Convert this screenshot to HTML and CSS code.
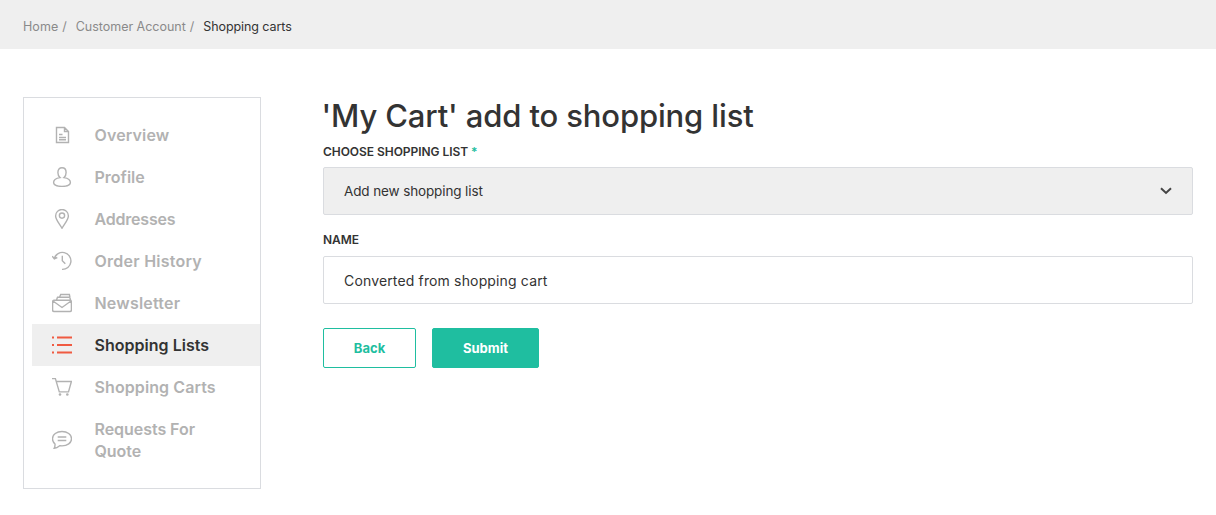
FILE: index.html
```html
<!DOCTYPE html>
<html lang="en">
<head>
<meta charset="utf-8">
<title>Add to shopping list</title>
<link rel="stylesheet" href="styles.css">
</head>
<body>
<nav class="breadcrumb">
  <a class="crumb crumb-home">Home</a><span class="sep">/</span>
  <a class="crumb crumb-account">Customer Account</a><span class="sep">/</span>
  <span class="crumb current">Shopping carts</span>
</nav>
<div class="layout">
  <aside class="menu">
    <a class="item"><svg class="icon" viewBox="0 0 20 20"><path d="M4.500 2.500h8l4 4v11h-12zM12.500 2.500v4h4M7 9.500h3.500M7 12.500h7M7 14.700h7"/></svg><span class="t-overview">Overview</span></a>
    <a class="item"><svg class="icon" viewBox="0 0 20 20"><path d="M8 10.600C6.700 9.600 5.900 7.700 5.900 5.500 5.900 2.500 7.400.8 10 .8s4.100 1.700 4.100 4.700c0 2.200-.8 4.100-2.100 5.100 3.600.5 6.400 2.300 6.400 5 0 2.600-3.600 3.800-8.400 3.800s-8.400-1.200-8.400-3.800c0-2.700 2.800-4.500 6.400-5z"/></svg><span class="t-profile">Profile</span></a>
    <a class="item"><svg class="icon" viewBox="0 0 20 20"><path d="M10 19.300C8.200 15.500 3.600 10.800 3.600 6.900a6.400 6.400 0 0 1 12.800 0c0 3.900-4.600 8.600-6.400 12.400z"/><circle cx="10" cy="6.600" r="2.600"/></svg><span class="t-addresses">Addresses</span></a>
    <a class="item"><svg class="icon" viewBox="0 0 20 20"><path d="M2.300 7.400A8.500 8.500 0 1 1 10 18.400M.2 5.200l2.100 2.600 3-1.300M10.300 4.800v5l3 3"/></svg><span class="t-history">Order History</span></a>
    <a class="item"><svg class="icon" viewBox="0 0 20 20"><path d="M2 7.300h16c.9 0 1.400.5 1.400 1.400v8.400c0 .9-.5 1.400-1.400 1.400H2c-.9 0-1.400-.5-1.400-1.400V8.700c0-.9.500-1.400 1.400-1.400zM1 8l9 6.500L19 8M4.500 7l1-2.700h12.300l.7 2.700M7.500 4.200l1.200-2.700h8.700l.5 2.700"/></svg><span class="t-newsletter">Newsletter</span></a>
    <a class="item active"><svg class="icon" viewBox="0 0 20 20"><path d="M0 2.500h2M5 2.500h15M0 10h2M5 10h15M0 17.500h2M5 17.500h15"/></svg><span class="t-lists">Shopping Lists</span></a>
    <a class="item"><svg class="icon" viewBox="0 0 20 20"><path d="M0 1.600h3.400l3.900 13.300h9.200L19.400 4.500H4.300"/><circle class="solid" cx="8" cy="17.500" r="1.300"/><circle class="solid" cx="15.300" cy="17.500" r="1.300"/></svg><span class="t-carts">Shopping Carts</span></a>
    <a class="item"><svg class="icon" viewBox="0 0 20 20"><path d="M10 1.500c5.300 0 9.500 3 9.500 7.200s-4.200 7.200-9.500 7.200c-.8 0-1.500-.1-2.300-.2-1.600 1.300-3.300 2.400-5.500 2.600.6-1.200.9-2.700.8-4.300C1.400 12.700.5 10.800.5 8.700.5 4.500 4.700 1.500 10 1.500zM5.700 7h8.600M5.700 10.500h8.600"/></svg><span class="t-quote">Requests For Quote</span></a>
  </aside>
  <main class="content">
    <h1 class="title">'My Cart' add to shopping list</h1>
    <label class="label label-list">CHOOSE SHOPPING LIST <span class="required">*</span></label>
    <div class="field select"><span class="t-option">Add new shopping list</span><svg class="chevron" viewBox="0 0 12 8"><path d="M1 1.300l5 4.700 5-4.700"/></svg></div>
    <label class="label label-name">NAME</label>
    <div class="field"><span class="t-value">Converted from shopping cart</span></div>
    <div class="actions"><a class="button back">Back</a><a class="button submit">Submit</a></div>
  </main>
</div>
</body>
</html>
```
FILE: styles.css
```css
* { box-sizing: border-box; }
body { margin: 0; background: #fff; color: #333; font-family: Inter, "Liberation Sans", sans-serif; }
.breadcrumb { display: flex; height: 49px; padding: 17px 23px 0; background: #efefef; font-size: 12.5px; line-height: 20px; color: #8a8a8a; white-space: nowrap; }
.crumb-home { letter-spacing: 0.05px; }
.crumb-account { letter-spacing: -0.02px; }
.current { color: #333; letter-spacing: -0.08px; }
.sep { margin: 0 9px 0 4px; }
.layout { display: flex; align-items: flex-start; gap: 62px; padding: 48px 23px 0; }
.menu { flex: none; width: 238px; padding: 16px 0 16px 8px; border: 1px solid #dadce0; }
.item { display: flex; align-items: center; gap: 22.5px; padding: 10px 30px 10px 20px; color: #b2b2b2; font-size: 16px; line-height: 22px; font-weight: 600; }
.t-overview { letter-spacing: 0.15px; }
.t-addresses { letter-spacing: -0.2px; }
.t-history { letter-spacing: 0.25px; }
.t-newsletter { letter-spacing: 0.2px; }
.t-lists { letter-spacing: 0.03px; }
.t-carts { letter-spacing: 0.1px; }
.t-quote { letter-spacing: -0.05px; }
.active { background: #efefef; color: #333; }
.icon { flex: none; width: 20px; height: 20px; fill: none; stroke: #b2b2b2; stroke-width: 1.4; }
.active .icon { stroke: #f05a41; stroke-width: 2.1; }
.icon .solid { fill: #b2b2b2; stroke: none; }
.content { flex: 1; display: flex; flex-direction: column; }
.title { margin: 0; height: 46px; font-size: 31px; line-height: 38px; font-weight: 500; letter-spacing: -0.14px; text-indent: -1.5px; white-space: nowrap; }
.label { height: 24px; font-size: 12px; line-height: 17px; font-weight: 600; letter-spacing: -0.05px; }
.label-name { height: 25px; margin-top: 16px; }
.required { color: #1fbea0; }
.field { display: flex; align-items: center; justify-content: space-between; height: 48px; padding: 0 20px; border: 1px solid #dadce0; border-radius: 2px; font-size: 14px; }
.select { background: #efefef; }
.t-option { font-size: 13.5px; letter-spacing: -0.12px; }
.t-value { letter-spacing: 0.15px; }
.chevron { width: 12px; height: 8px; fill: none; stroke: #444; stroke-width: 2; }
.actions { display: flex; gap: 16px; margin-top: 24px; }
.button { display: flex; align-items: center; justify-content: center; height: 40px; border: 1px solid #1fbea0; border-radius: 2px; font-size: 13px; font-weight: 700; }
.back { width: 93px; color: #1fbea0; }
.submit { width: 107px; background: #1fbea0; color: #fff; }
```
